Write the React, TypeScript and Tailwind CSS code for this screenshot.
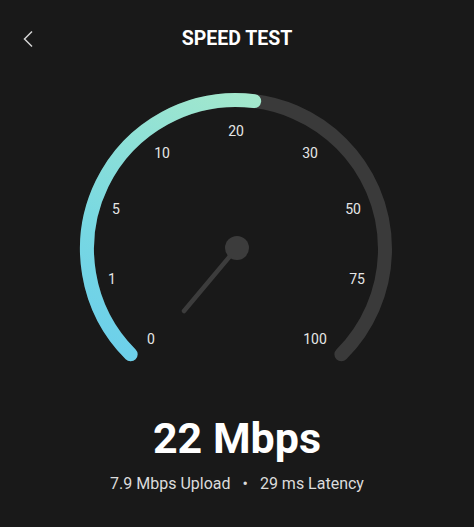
import React from "react";

const CX = 236;
const CY = 169;
const R = 149;

function polar(deg: number) {
  // deg measured clockwise from the top
  const rad = ((deg - 90) * Math.PI) / 180;
  return { x: CX + R * Math.cos(rad), y: CY + R * Math.sin(rad) };
}

function arc(from: number, to: number) {
  const a = polar(from);
  const b = polar(to);
  const large = to - from > 180 ? 1 : 0;
  return `M ${a.x.toFixed(2)} ${a.y.toFixed(2)} A ${R} ${R} 0 ${large} 1 ${b.x.toFixed(2)} ${b.y.toFixed(2)}`;
}

const labels = [
  { t: "0", x: 151, y: 339 },
  { t: "1", x: 112, y: 279 },
  { t: "5", x: 116, y: 209 },
  { t: "10", x: 162, y: 153 },
  { t: "20", x: 236, y: 131 },
  { t: "30", x: 310, y: 153 },
  { t: "50", x: 353, y: 209 },
  { t: "75", x: 357, y: 279 },
  { t: "100", x: 315, y: 339 },
];

function Gauge() {
  return (
    <svg width={474} height={300} viewBox="0 0 474 300" className="block">
      <defs>
        <linearGradient id="fill" gradientUnits="userSpaceOnUse" x1="130" y1="274" x2="256" y2="20">
          <stop offset="0" stopColor="#6dd0ea" />
          <stop offset="0.35" stopColor="#78d8e2" />
          <stop offset="1" stopColor="#a3e8cc" />
        </linearGradient>
      </defs>
      <path d={arc(-135, 135)} fill="none" stroke="#3a3a3a" strokeWidth={14} strokeLinecap="round" />
      <path d={arc(-135, 7)} fill="none" stroke="url(#fill)" strokeWidth={14} strokeLinecap="round" />
      {labels.map((l) => (
        <text
          key={l.t}
          x={l.x}
          y={l.y - 80}
          textAnchor="middle"
          dominantBaseline="central"
          fill="#e6e6e6"
          fontSize={14}
          fontFamily="Roboto, sans-serif"
        >
          {l.t}
        </text>
      ))}
      <line x1={CX} y1={CY} x2={184} y2={231} stroke="#3c3c3c" strokeWidth={4.5} strokeLinecap="round" />
      <circle cx={CX + 1} cy={CY - 1} r={12} fill="#3c3c3c" />
    </svg>
  );
}

export default function App() {
  return (
    <div className="w-[474px] h-[527px] bg-[#191919] text-white font-['Roboto',sans-serif] overflow-hidden">
      <header className="relative h-[80px] flex items-center justify-center">
        <svg className="absolute left-[21px] top-[30px]" width="14" height="18" viewBox="0 0 14 18">
          <path d="M11 1.5 L3.5 9 L11 16.5" fill="none" stroke="#d4d4d4" strokeWidth="1.5" />
        </svg>
        <h1 className="text-[19.5px] font-bold -mt-[2px]">SPEED TEST</h1>
      </header>
      <Gauge />
      <div className="flex flex-col items-center mt-[32px]">
        <div className="text-[43px] leading-[52px] font-bold">22 Mbps</div>
        <div className="text-[16px] leading-[22px] text-[#dcdcdc] mt-[9px] flex items-center gap-[12px]">
          <span>7.9 Mbps Upload</span>
          <span>•</span>
          <span>29 ms Latency</span>
        </div>
      </div>
    </div>
  );
}
